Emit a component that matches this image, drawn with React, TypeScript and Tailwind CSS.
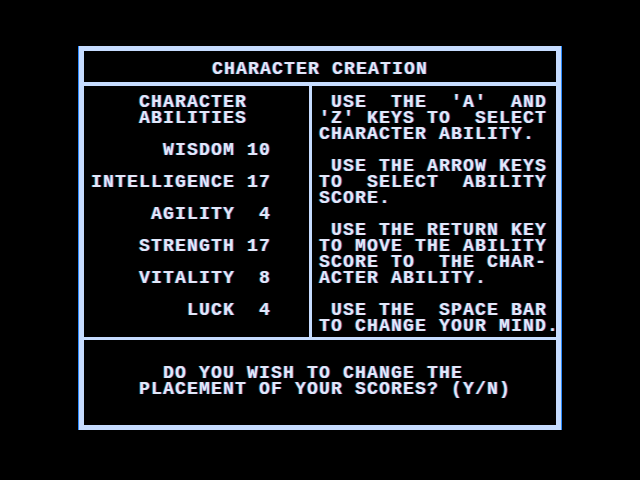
const leftLines = [
  "    CHARACTER",
  "    ABILITIES",
  "",
  "      WISDOM 10",
  "",
  "INTELLIGENCE 17",
  "",
  "     AGILITY  4",
  "",
  "    STRENGTH 17",
  "",
  "    VITALITY  8",
  "",
  "        LUCK  4",
];

const rightLines = [
  " USE  THE  'A'  AND",
  "'Z' KEYS TO  SELECT",
  "CHARACTER ABILITY.",
  "",
  " USE THE ARROW KEYS",
  "TO  SELECT  ABILITY",
  "SCORE.",
  "",
  " USE THE RETURN KEY",
  "TO MOVE THE ABILITY",
  "SCORE TO  THE CHAR-",
  "ACTER ABILITY.",
  "",
  " USE THE  SPACE BAR",
  "TO CHANGE YOUR MIND.",
];

const promptLines = [
  "      DO YOU WISH TO CHANGE THE",
  "    PLACEMENT OF YOUR SCORES? (Y/N)",
];

function TextBlock({ lines }: { lines: string[] }) {
  return (
    <div className="whitespace-pre">
      {lines.map((line, i) => (
        <div key={i} className="h-[16px]">
          {line}
        </div>
      ))}
    </div>
  );
}

export default function App() {
  return (
    <div className="h-[480px] w-[640px] bg-black pl-[79px] pt-[46px] font-['Liberation_Mono',monospace] text-[18px] font-bold leading-[16px] tracking-[1.2px] text-[#e2e8fa] [text-shadow:1px_0_0_rgba(150,90,255,0.55),-1px_0_0_rgba(90,210,120,0.35)]">
      {/* Frame */}
      <div className="flex h-[384px] w-[482px] flex-col border-[5px] border-[#c6dcff] shadow-[-1px_0_0_#2f8cff,1px_0_0_#2f8cff]">
        {/* Title */}
        <div className="h-[31px] pt-[10px] text-center">CHARACTER CREATION</div>
        <div className="h-[4px] bg-[#c6dcff]" />

        {/* Abilities + instructions */}
        <div className="flex h-[251px]">
          <div className="w-[225px] shrink-0 pl-[7px] pt-[8px]">
            <TextBlock lines={leftLines} />
          </div>
          <div className="w-[3px] shrink-0 bg-[#c6dcff]" />
          <div className="min-w-0 flex-1 pl-[7px] pt-[8px]">
            <TextBlock lines={rightLines} />
          </div>
        </div>
        <div className="h-[3px] bg-[#c6dcff]" />

        {/* Prompt */}
        <div className="flex-1 pl-[7px] pt-[25px]">
          <TextBlock lines={promptLines} />
        </div>
      </div>
    </div>
  );
}
